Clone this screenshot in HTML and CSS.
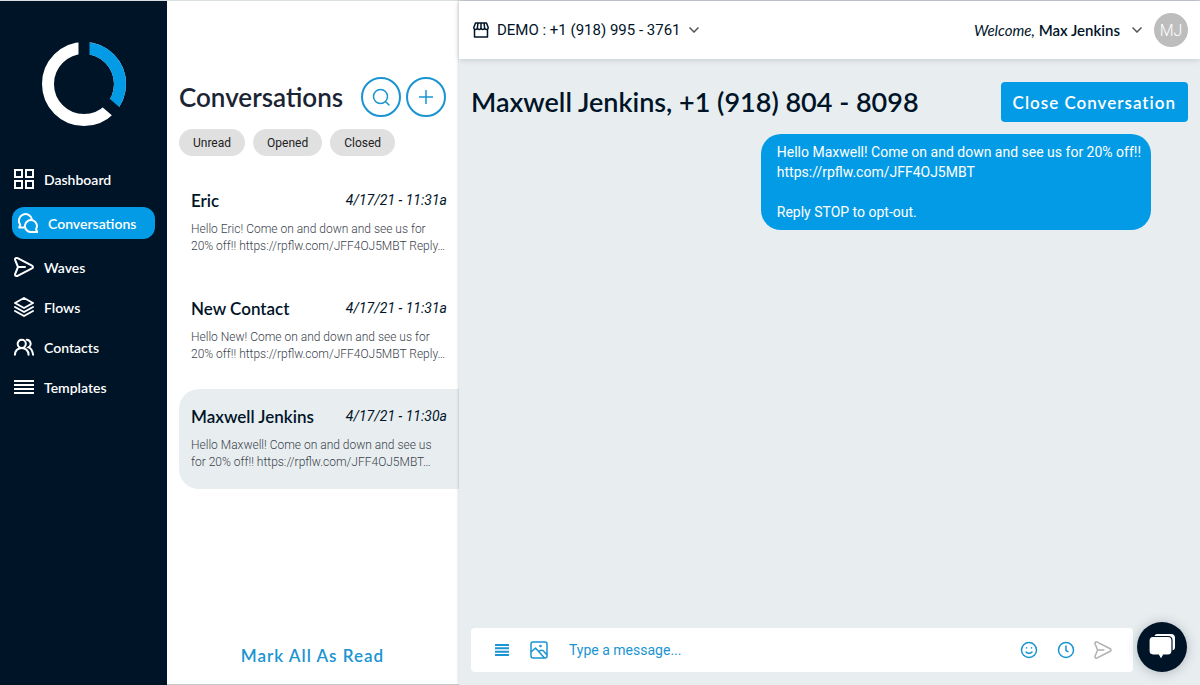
FILE: index.html
```html
<!DOCTYPE html>
<html lang="en">
<head>
    <meta charset="UTF-8">
    <meta name="viewport" content="width=device-width, initial-scale=1.0">
    <title>Conversations</title>
    <link rel="stylesheet" href="styles.css">
</head>
<body>
    <div class="app">
        <!-- Sidebar -->
        <aside class="sidebar">
            <a class="logo" href="#" aria-label="Home">
                <svg width="84" height="84" viewBox="0 0 84 84" fill="none" stroke-width="12">
                    <circle cx="42" cy="42" r="36" stroke="#fff"/>
                    <path d="M42 6A36 36 0 0 1 69.500 65.200" stroke="#049be6"/>
                    <path d="M42 0v42l36 31" stroke="#001428" stroke-width="11"/>
                </svg>
            </a>
            <nav class="nav">
                <a class="nav-item" href="#">
                    <svg width="20" height="20" viewBox="0 0 20 20" fill="none" stroke="currentColor" stroke-width="2">
                        <path d="M1 1h7v7H1zM12 1h7v7h-7zM1 12h7v7H1zM12 12h7v7h-7z"/>
                    </svg>
                    Dashboard
                </a>
                <a class="nav-item active" href="#" aria-current="page">
                    <svg width="20" height="20" viewBox="0 0 20 20" fill="none" stroke="currentColor" stroke-width="2" stroke-linejoin="round">
                        <path d="M6 14.500H1.200l1-2.900A6.600 6.600 0 1 1 14 6.500"/>
                        <path d="M18 16.200l1.200 2.800h-6A6 6 0 1 1 18 16.200z"/>
                    </svg>
                    Conversations
                </a>
                <a class="nav-item" href="#">
                    <svg width="20" height="20" viewBox="0 0 20 20" fill="none" stroke="currentColor" stroke-width="2" stroke-linejoin="round" stroke-linecap="round">
                        <path d="M3.600 1.200L18 8.600a1.500 1.500 0 0 1 0 2.800L3.600 18.800c-1.600.8-3-.4-2.400-2L4 10 1.200 3.200c-.6-1.600.8-2.800 2.400-2zM4 10h7"/>
                    </svg>
                    Waves
                </a>
                <a class="nav-item" href="#">
                    <svg width="20" height="20" viewBox="0 0 20 20" fill="none" stroke="currentColor" stroke-width="2" stroke-linejoin="round" stroke-linecap="round">
                        <path d="M10 1l9 5-9 5-9-5zM1 10l9 5 9-5M1 14l9 5 9-5"/>
                    </svg>
                    Flows
                </a>
                <a class="nav-item" href="#">
                    <svg width="20" height="20" viewBox="0 0 22 20" fill="none" stroke="currentColor" stroke-width="2.200" stroke-linecap="round">
                        <circle cx="8.500" cy="6.500" r="4.500"/>
                        <path d="M1 18.500c0-4.500 3.500-7.500 7.500-7.500s7.500 3 7.500 7.500M14 2a4.500 4.500 0 0 1 2 8.400c2.700 1 4.500 4.100 5 8.100"/>
                    </svg>
                    Contacts
                </a>
                <a class="nav-item" href="#">
                    <svg width="20" height="20" viewBox="0 0 20 20" fill="none" stroke="currentColor" stroke-width="2">
                        <path d="M0 4h20M0 8h20M0 12h20M0 16h20"/>
                    </svg>
                    Templates
                </a>
            </nav>
        </aside>

        <!-- Conversation list -->
        <section class="list">
            <div class="list-header">
                <h1>Conversations</h1>
                <div class="list-actions">
                    <button class="round-btn" type="button" aria-label="Search">
                        <svg width="18" height="18" viewBox="0 0 18 18" fill="none" stroke="currentColor" stroke-width="1.500" stroke-linecap="round">
                            <circle cx="8.500" cy="8.500" r="7"/>
                            <path d="M13.500 13.500l3.500 3.500"/>
                        </svg>
                    </button>
                    <button class="round-btn" type="button" aria-label="New conversation">
                        <svg width="14" height="14" viewBox="0 0 14 14" fill="none" stroke="currentColor" stroke-width="1.500">
                            <path d="M7 0v14M0 7h14"/>
                        </svg>
                    </button>
                </div>
            </div>
            <div class="chips">
                <button class="chip" type="button">Unread</button>
                <button class="chip" type="button">Opened</button>
                <button class="chip" type="button">Closed</button>
            </div>
            <div class="threads">
                <a class="thread" href="#">
                    <div class="thread-top">
                        <h2>Eric</h2>
                        <time>4/17/21 - 11:31a</time>
                    </div>
                    <p>Hello Eric! Come on and down and see us for 20% off!! https://rpflw.com/JFF4OJ5MBT Reply…</p>
                </a>
                <a class="thread" href="#">
                    <div class="thread-top">
                        <h2>New Contact</h2>
                        <time>4/17/21 - 11:31a</time>
                    </div>
                    <p>Hello New! Come on and down and see us for 20% off!! https://rpflw.com/JFF4OJ5MBT Reply…</p>
                </a>
                <a class="thread selected" href="#">
                    <div class="thread-top">
                        <h2>Maxwell Jenkins</h2>
                        <time>4/17/21 - 11:30a</time>
                    </div>
                    <p>Hello Maxwell! Come on and down and see us for 20% off!! https://rpflw.com/JFF4OJ5MBT…</p>
                </a>
            </div>
            <button class="mark-read" type="button">Mark All As Read</button>
        </section>

        <!-- Main area -->
        <main class="main">
            <header class="topbar">
                <div class="location">
                    <svg width="16" height="16" viewBox="0 0 16 16" fill="none" stroke="currentColor" stroke-width="1.500" stroke-linejoin="round">
                        <path d="M2.500 1h11L15.200 5.500c0 2.600-3.600 2.600-3.600 0 0 2.600-3.600 2.600-3.600 0 0 2.600-3.600 2.600-3.600 0 0 2.600-3.600 2.600-3.600 0zM1.500 7.500V15h13V7.500M4.400 5.500L5 1M8 5.500V1M11.600 5.500L11 1"/>
                    </svg>
                    <select aria-label="Location">
                        <option>DEMO : +1 (918) 995 - 3761</option>
                    </select>
                    <svg class="chevron" width="10" height="6" viewBox="0 0 10 6" fill="none" stroke="currentColor" stroke-width="1.500">
                        <path d="M.5.500L5 5 9.500.500"/>
                    </svg>
                </div>
                <button class="user" type="button" aria-haspopup="menu">
                    <span><em>Welcome,</em> <strong>Max Jenkins</strong></span>
                    <svg class="chevron" width="10" height="6" viewBox="0 0 10 6" fill="none" stroke="currentColor" stroke-width="1.500">
                        <path d="M.5.500L5 5 9.500.500"/>
                    </svg>
                    <span class="avatar">MJ</span>
                </button>
            </header>

            <div class="chat">
                <div class="chat-header">
                    <h2>Maxwell Jenkins, +1 (918) 804 - 8098</h2>
                    <button class="close-btn" type="button">Close Conversation</button>
                </div>
                <div class="messages">
                    <p class="bubble">Hello Maxwell! Come on and down and see us for 20% off!!<br>https://rpflw.com/JFF4OJ5MBT<br><br>Reply STOP to opt-out.</p>
                </div>
                <form class="composer">
                    <button class="tool" type="button" aria-label="Templates">
                        <svg width="14" height="14" viewBox="0 0 14 14" fill="none" stroke="currentColor" stroke-width="2">
                            <path d="M0 2h14M0 5.300h14M0 8.700h14M0 12h14"/>
                        </svg>
                    </button>
                    <button class="tool" type="button" aria-label="Add image">
                        <svg width="18" height="18" viewBox="0 0 18 18" fill="none" stroke="currentColor" stroke-width="1.500" stroke-linejoin="round">
                            <rect x="1" y="1" width="16" height="16" rx="2"/>
                            <path d="M1 11l4.500-4L14.500 17M9 10.500q3-2.500 5 0l3 3.500"/>
                            <circle cx="10.500" cy="5" r=".6"/>
                        </svg>
                    </button>
                    <input type="text" placeholder="Type a message..." aria-label="Message">
                    <button class="tool" type="button" aria-label="Add emoji">
                        <svg width="18" height="18" viewBox="0 0 18 18" fill="none" stroke="currentColor" stroke-width="1.500" stroke-linecap="round">
                            <circle cx="9" cy="9" r="7.500"/>
                            <path d="M6 11c1.500 1.800 4.500 1.800 6 0M6.500 6.800v.2M11.500 6.800v.2"/>
                        </svg>
                    </button>
                    <button class="tool" type="button" aria-label="Schedule">
                        <svg width="18" height="18" viewBox="0 0 18 18" fill="none" stroke="currentColor" stroke-width="1.500" stroke-linecap="round">
                            <circle cx="9" cy="9" r="7.500"/>
                            <path d="M9 5v4.500l2 1.200"/>
                        </svg>
                    </button>
                    <button class="tool send" type="submit" aria-label="Send">
                        <svg width="18" height="18" viewBox="0 0 20 20" fill="none" stroke="currentColor" stroke-width="1.600" stroke-linejoin="round" stroke-linecap="round">
                            <path d="M3.600 1.200L18 8.600a1.500 1.500 0 0 1 0 2.800L3.600 18.800c-1.600.8-3-.4-2.400-2L4 10 1.200 3.200c-.6-1.600.8-2.800 2.400-2zM4 10h7"/>
                        </svg>
                    </button>
                </form>
            </div>
        </main>
    </div>

    <!-- Support chat launcher -->
    <button class="launcher" type="button" aria-label="Open support chat">
        <svg width="26" height="26" viewBox="0 0 26 26">
            <path d="M8 0h14q4 0 4 4v9q0 3-3 3.500V8q0-4-4-4H5q.5-4 3-4z" fill="#fff"/>
            <path d="M4 2.500h15q4 0 4 4V17q0 4-4 4h-4.500L12 25.500 9.500 21H4q-4 0-4-4V6.500q0-4 4-4z" fill="#fff" stroke="#001428" stroke-width="1.200"/>
        </svg>
    </button>
</body>
</html>
```

FILE: styles.css
```css
* {
    box-sizing: border-box;
}

body {
    margin: 0;
    font-family: Roboto, sans-serif;
    color: #001428;
    background-color: #e8eef0;
}

h1, h2, p {
    margin: 0;
}

a {
    color: inherit;
    text-decoration: none;
}

button {
    padding: 0;
    border: 0;
    background: none;
    font-family: inherit;
    color: inherit;
    cursor: pointer;
}

svg {
    display: block;
    flex-shrink: 0;
}

.app {
    display: grid;
    grid-template-columns: 167px 292px 1fr;
    min-height: 100vh;
    border-top: 1px solid #d9dee1;
}

/* Sidebar */
.sidebar {
    background: #001428;
    color: #fff;
    padding-top: 41px;
}

.logo {
    display: flex;
    justify-content: center;
    margin-bottom: 33px;
}

.nav {
    display: flex;
    flex-direction: column;
    font-family: Lato, sans-serif;
    font-size: 14px;
    font-weight: 600;
}

.nav-item {
    display: flex;
    align-items: center;
    gap: 10px;
    height: 40px;
    padding: 0 14px;
}

.nav-item.active {
    height: 32px;
    margin: 8px 12px;
    padding: 0 6px;
    border-radius: 12px;
    background: #049be6;
}

/* Conversation list */
.list {
    display: flex;
    flex-direction: column;
    padding: 76px 0 16px 12px;
    background: #fff;
    border-bottom: 1px solid #c8c8c8;
}

.list-header {
    display: flex;
    align-items: center;
    justify-content: space-between;
    padding-right: 13px;
}

.list-header h1 {
    color: #1a2433;
    font-family: Lato, sans-serif;
    font-size: 26px;
    font-weight: 600;
    line-height: 36px;
}

.list-actions {
    display: flex;
    gap: 5px;
}

.round-btn {
    display: flex;
    align-items: center;
    justify-content: center;
    width: 40px;
    height: 40px;
    border: 2px solid #1a94d2;
    border-radius: 50%;
    color: #1a94d2;
}

.chips {
    display: flex;
    gap: 8px;
    margin: 12px 0 17px;
}

.chip {
    height: 27px;
    padding: 0 14px;
    border-radius: 14px;
    background: #e0e0e0;
    color: #222;
    font-size: 12px;
}

.threads {
    display: flex;
    flex-direction: column;
    gap: 8px;
}

.thread {
    height: 100px;
    padding: 15px 12px;
    border-radius: 20px 0 0 20px;
}

.thread.selected {
    background: #e8eef0;
}

.thread-top {
    display: flex;
    align-items: center;
    justify-content: space-between;
    height: 24px;
    margin-bottom: 9px;
}

.thread h2 {
    font-family: Lato, sans-serif;
    font-size: 17px;
    font-weight: 600;
}

.thread time {
    font-size: 14px;
    font-style: italic;
}

.thread p {
    color: #3a424c;
    font-size: 12px;
    font-weight: 300;
    line-height: 17px;
}

.mark-read {
    align-self: center;
    margin-top: auto;
    margin-right: 13px;
    color: #1a94d2;
    font-family: Lato, sans-serif;
    font-size: 17px;
    font-weight: 600;
    line-height: 24px;
    letter-spacing: 1px;
}

/* Main area */
.main {
    display: flex;
    flex-direction: column;
    box-shadow: 0 0 3px rgba(0, 20, 40, 0.25);
}

.topbar {
    display: flex;
    align-items: center;
    justify-content: space-between;
    height: 58px;
    padding: 0 12px 0 14px;
    background: #fff;
    box-shadow: 0 1px 6px rgba(0, 20, 40, 0.15);
}

.location {
    display: flex;
    align-items: center;
    gap: 8px;
}

.location select {
    appearance: none;
    padding: 0;
    border: 0;
    background: none;
    color: inherit;
    font-family: inherit;
    font-size: 15px;
}

.chevron {
    color: #555;
}

.user {
    display: flex;
    align-items: center;
    gap: 12px;
    font-family: Lato, sans-serif;
    font-size: 15px;
}

.user strong {
    font-weight: 600;
}

.avatar {
    display: flex;
    align-items: center;
    justify-content: center;
    width: 34px;
    height: 34px;
    border-radius: 50%;
    background: #bdbdbd;
    color: #fff;
    font-family: Roboto, sans-serif;
    font-size: 16px;
    font-weight: 300;
}

.chat {
    display: flex;
    flex: 1;
    flex-direction: column;
    padding: 23px 12px 13px;
}

.chat-header {
    display: flex;
    align-items: center;
    justify-content: space-between;
}

.chat-header h2 {
    font-family: Lato, sans-serif;
    font-size: 27px;
    font-weight: 600;
    line-height: 36px;
}

.close-btn {
    height: 40px;
    padding: 0 12px;
    border-radius: 4px;
    background: #049be6;
    color: #fff;
    font-family: Lato, sans-serif;
    font-size: 17px;
    font-weight: 600;
    letter-spacing: 1px;
}

.messages {
    display: flex;
    flex: 1;
    flex-direction: column;
    align-items: flex-end;
    padding: 12px 37px;
}

.bubble {
    max-width: 400px;
    padding: 8px 10px 8px 16px;
    border-radius: 20px;
    background: #049be6;
    color: #fff;
    font-size: 14px;
    line-height: 20px;
}

.composer {
    display: flex;
    align-items: center;
    height: 44px;
    margin-right: 55px;
    padding: 0 12px;
    border-radius: 4px;
    background: #fff;
}

.tool {
    display: flex;
    align-items: center;
    justify-content: center;
    width: 37px;
    height: 36px;
    color: #1a94d2;
}

.tool.send {
    color: #b0b0b0;
}

.composer input {
    flex: 1;
    min-width: 0;
    padding: 0 12px;
    border: 0;
    outline: 0;
    font-family: inherit;
    font-size: 14px;
}

.composer input::placeholder {
    color: #1a94d2;
}

.launcher {
    position: fixed;
    right: 13px;
    bottom: 13px;
    display: flex;
    align-items: center;
    justify-content: center;
    width: 50px;
    height: 50px;
    border-radius: 50%;
    background: #001428;
    box-shadow: 0 1px 12px rgba(0, 20, 40, 0.25);
}
```
